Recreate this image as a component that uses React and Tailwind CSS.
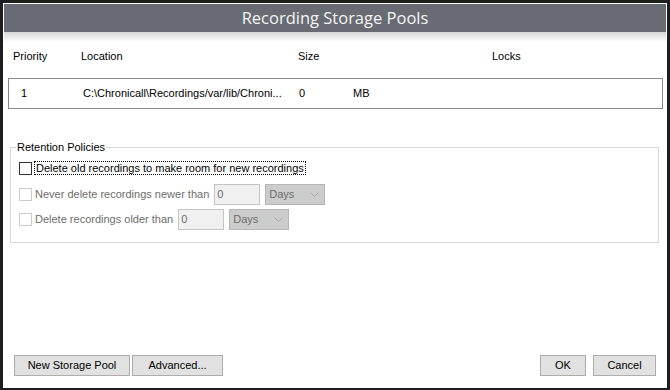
import React from "react";

const Chevron = () => (
  <svg width="9" height="5" viewBox="0 0 9 5" className="block">
    <path d="M0.5 0.5 L4.5 4.5 L8.5 0.5" fill="none" stroke="#a8a8a8" strokeWidth="1" />
  </svg>
);

function DisabledRow({ label, inputW, selW }) {
  return (
    <div className="flex items-center h-[22px]">
      <div className="w-[13px] h-[13px] border border-[#cccccc] bg-white ml-[3px]" />
      <span className="ml-[3px] mr-[5px] text-[#6d6d6d]">{label}</span>
      <div className={`${inputW} h-[21px] border border-[#c4c4c4] bg-[#f0f0f0] flex items-center pl-[2px] text-[#6d6d6d]`}>0</div>
      <div className={`${selW} ml-[5px] h-[21px] border border-[#b6b6b6] bg-[#cccccc] flex items-center justify-between pl-[3px] pr-[5px] text-[#6d6d6d]`}>
        <span>Days</span>
        <Chevron />
      </div>
    </div>
  );
}

export default function App() {
  return (
    <div className="w-[670px] h-[390px] bg-[#1e1e1e] pt-[3px] pl-[3px] overflow-hidden" style={{ fontFamily: '"Liberation Sans", Arial, sans-serif' }}>
      <div className="w-[664px] h-[385px] bg-white p-[1px] flex flex-col text-[11px] text-black">
        <div className="h-[28px] bg-[#686b73] flex items-center justify-center text-[#f4f4f4] text-[16.5px]" style={{ fontFamily: '"Open Sans", sans-serif' }}>
          Recording Storage Pools
        </div>
        <div className="h-[10px] bg-gradient-to-b from-[#d6d6d6] to-white" />
        <div className="flex flex-col flex-1">
          <div className="flex mt-[7px] h-[14px] items-center pl-[9px]">
            <span className="w-[68px]">Priority</span>
            <span className="w-[217px]">Location</span>
            <span className="w-[194px]">Size</span>
            <span>Locks</span>
          </div>
          <div className="mt-[15px] ml-[4px] w-[655px] h-[31px] border border-[#8a8a8a] flex items-center pl-[12px]">
            <span className="w-[62px]">1</span>
            <span className="w-[216px]">C:\Chronicall\Recordings/var/lib/Chroni...</span>
            <span className="w-[54px]">0</span>
            <span>MB</span>
          </div>
          <fieldset className="mt-[32px] ml-[6px] w-[649px] h-[102px] border border-[#d8d8d8] px-[5px]">
            <legend className="px-[1px] leading-[13px]">Retention Policies</legend>
            <div className="flex flex-col mt-[3px]">
              <div className="flex items-center h-[22px]">
                <div className="w-[13px] h-[13px] border border-[#333333] bg-white ml-[3px]" />
                <span className="ml-[2px] px-[1px] border border-dotted border-black leading-[12px]">Delete old recordings to make room for new recordings</span>
              </div>
              <div className="h-[4px]" />
              <DisabledRow label="Never delete recordings newer than" inputW="w-[46px]" selW="w-[60px]" />
              <div className="h-[3px]" />
              <DisabledRow label="Delete recordings older than" inputW="w-[46px]" selW="w-[60px]" />
            </div>
          </fieldset>
          <div className="flex-1" />
          <div className="flex items-center px-[10px] mb-[11px]">
            <button className="w-[116px] h-[21px] bg-[#e1e1e1] border border-[#adadad]">New Storage Pool</button>
            <button className="ml-[2px] w-[91px] h-[21px] bg-[#e1e1e1] border border-[#adadad]">Advanced...</button>
            <div className="flex-1" />
            <button className="w-[46px] h-[21px] bg-[#e1e1e1] border border-[#adadad]">OK</button>
            <button className="ml-[7px] w-[63px] h-[21px] bg-[#e1e1e1] border border-[#adadad]">Cancel</button>
          </div>
        </div>
      </div>
    </div>
  );
}
